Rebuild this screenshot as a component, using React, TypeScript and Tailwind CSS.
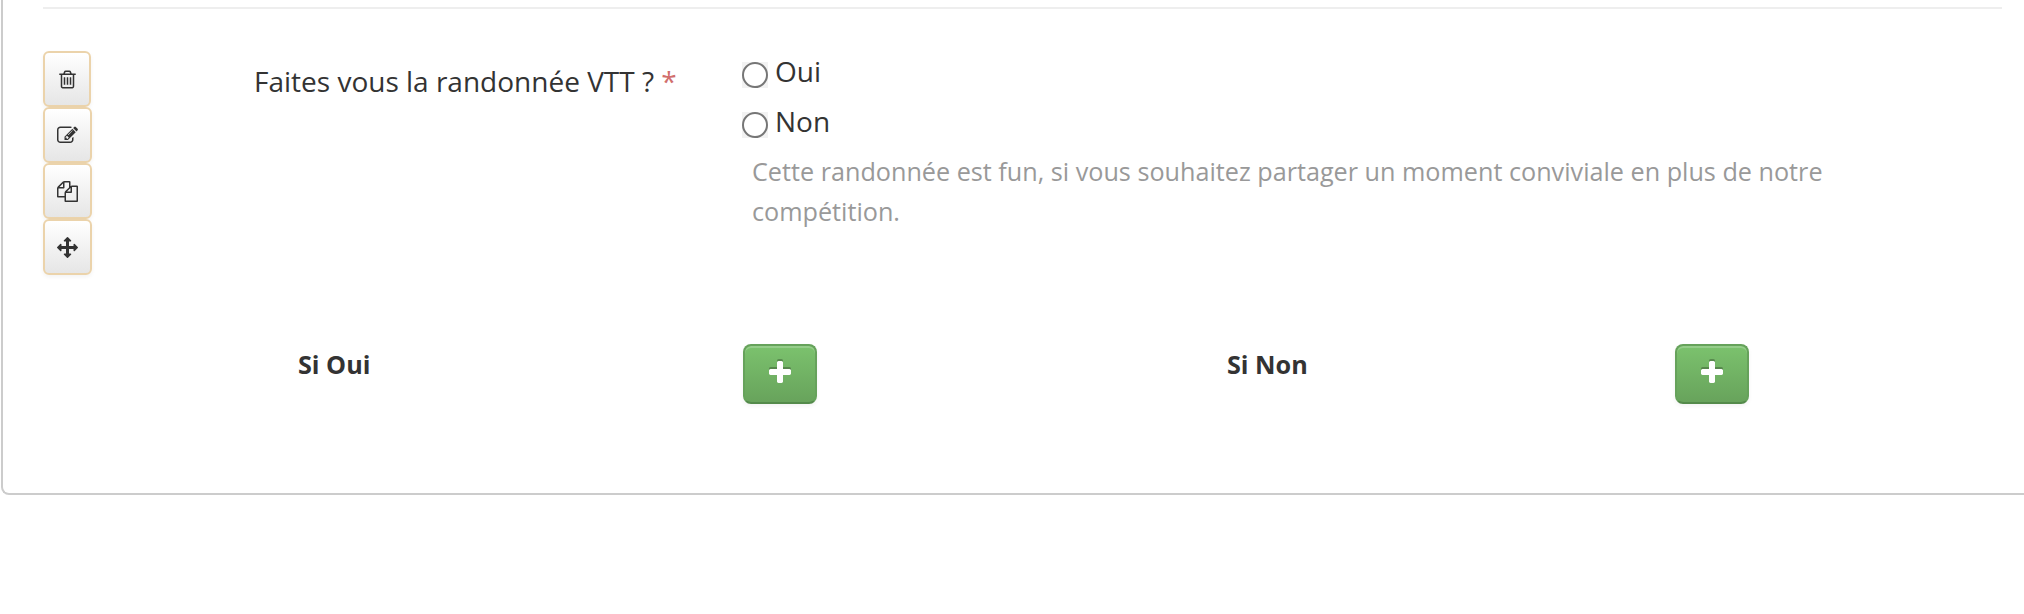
import { useState } from 'react';

const icons = {
  trash: 'M704 736v576q0 14-9 23t-23 9h-64q-14 0-23-9t-9-23v-576q0-14 9-23t23-9h64q14 0 23 9t9 23zm256 0v576q0 14-9 23t-23 9h-64q-14 0-23-9t-9-23v-576q0-14 9-23t23-9h64q14 0 23 9t9 23zm256 0v576q0 14-9 23t-23 9h-64q-14 0-23-9t-9-23v-576q0-14 9-23t23-9h64q14 0 23 9t9 23zm128 724v-948h-896v948q0 22 7 40.5t14.5 27 10.5 8.5h832q3 0 10.5-8.5t14.5-27 7-40.5zm-672-1076h448l-48-117q-7-9-17-11h-317q-10 2-17 11zm928 32v64q0 14-9 23t-23 9h-96v948q0 83-47 143.5t-113 60.5h-832q-66 0-113-58.5t-47-141.5v-952h-96q-14 0-23-9t-9-23v-64q0-14 9-23t23-9h309l70-167q15-37 54-63t79-26h320q40 0 79 26t54 63l70 167h309q14 0 23 9t9 23z',
  edit: 'M888 1184l116-116-152-152-116 116v56h96v96h56zm440-720q-16-16-33 1l-350 350q-17 17-1 33t33-1l350-350q17-17 1-33zm80 594v190q0 119-84.5 203.5t-203.5 84.5h-832q-119 0-203.5-84.5t-84.5-203.5v-832q0-119 84.5-203.5t203.5-84.5h832q63 0 117 25 15 7 18 23 3 17-9 29l-49 49q-14 14-32 8-23-6-45-6h-832q-66 0-113 47t-47 113v832q0 66 47 113t113 47h832q66 0 113-47t47-113v-126q0-13 9-22l64-64q15-15 35-7t20 29zm-96-738l288 288-672 672h-288v-288zm444 132l-92 92-288-288 92-92q28-28 68-28t68 28l152 152q28 28 28 68t-28 68z',
  copy: 'M1696 384q40 0 68 28t28 68v1216q0 40-28 68t-68 28h-960q-40 0-68-28t-28-68v-288h-544q-40 0-68-28t-28-68v-672q0-40 20-88t48-76l408-408q28-28 76-48t88-20h416q40 0 68 28t28 68v328q68-40 128-40h416zm-544 213l-299 299h299v-299zm-640-384l-299 299h299v-299zm196 647l316-316v-416h-384v416q0 40-28 68t-68 28h-416v640h512v-256q0-40 20-88t48-76zm956 804v-1152h-384v416q0 40-28 68t-68 28h-416v640h896z',
  move: 'M1792 896q0 26-19 45l-256 256q-19 19-45 19t-45-19-19-45v-128h-384v384h128q26 0 45 19t19 45-19 45l-256 256q-19 19-45 19t-45-19l-256-256q-19-19-19-45t19-45 45-19h128v-384h-384v128q0 26-19 45t-45 19-45-19l-256-256q-19-19-19-45t19-45l256-256q19-19 45-19t45 19 19 45v128h384v-384h-128q-26 0-45-19t-19-45 19-45l256-256q19-19 45-19t45 19l256 256q19 19 19 45t-19 45-45 19h-128v384h384v-128q0-26 19-45t45-19 45 19l256 256q19 19 19 45z',
  plus: 'M1600 736v192q0 40-28 68t-68 28h-416v416q0 40-28 68t-68 28h-192q-40 0-68-28t-28-68v-416h-416q-40 0-68-28t-28-68v-192q0-40 28-68t68-28h416v-416q0-40 28-68t68-28h192q40 0 68 28t28 68v416h416q40 0 68 28t28 68z',
};

const actions: { label: string; icon: keyof typeof icons; width: string }[] = [
  { label: 'Supprimer', icon: 'trash', width: 'w-12' },
  { label: 'Modifier', icon: 'edit', width: 'w-[49px]' },
  { label: 'Dupliquer', icon: 'copy', width: 'w-[49px]' },
  { label: 'Déplacer', icon: 'move', width: 'w-[49px]' },
];

function Icon({ name, className }: { name: keyof typeof icons; className: string }) {
  return (
    <svg viewBox="0 0 1792 1792" fill="currentColor" className={`overflow-visible ${className}`}>
      <path d={icons[name]} />
    </svg>
  );
}

function AddButton({ label }: { label: string }) {
  return (
    <button
      type="button"
      aria-label={label}
      className="flex h-[60px] w-[74px] items-center justify-center rounded-lg border-2 border-[#66a25b] border-b-[#548a4b] bg-linear-to-b from-[#7cc36e] to-[#67a25b] bg-origin-border text-white shadow-[inset_0_2px_0_rgba(255,255,255,0.2),0_2px_4px_rgba(0,0,0,0.05)]"
    >
      <Icon name="plus" className="mb-0.5 size-7 drop-shadow-[0_-2px_0_rgba(0,0,0,0.25)]" />
    </button>
  );
}

export default function App() {
  const [answer, setAnswer] = useState('');

  return (
    <div className="h-[614px] overflow-hidden bg-white pl-px font-['Open_Sans',sans-serif] text-[#333]">
      <div className="h-[495px] rounded-bl-lg border-b-2 border-l-2 border-[#ccc] pt-[7px] pl-10">
        <hr className="w-[1959px] border-t-2 border-[#eee]" />

        <div className="flex pt-[42px]">
          <div className="flex w-[211px] flex-col">
            {actions.map(action => (
              <button
                key={action.icon}
                type="button"
                aria-label={action.label}
                className={`flex h-14 items-center justify-center rounded-md border-2 border-[#ebd3ab] bg-linear-to-b from-white to-[#e6e6e6] shadow-[0_2px_4px_rgba(0,0,0,0.05)] ${action.width}`}
              >
                <Icon name={action.icon} className="size-[21px]" />
              </button>
            ))}
          </div>

          <div className="w-[488px] pt-[10px] text-[28px] leading-10 whitespace-nowrap">
            Faites vous la randonnée VTT ? <span className="text-[#d16e6c]">*</span>
          </div>

          <div>
            {['Oui', 'Non'].map(option => (
              <label key={option} className="flex h-[50px] items-start text-[28px] leading-10">
                <span className="mt-[11px] mr-[7px] flex bg-[#f2f2f2]">
                  <input
                    type="radio"
                    name="vtt"
                    checked={answer === option}
                    onChange={() => setAnswer(option)}
                    className="size-[26px] appearance-none rounded-full border-2 border-[#767676] bg-white checked:border-8"
                  />
                </span>
                {option}
              </label>
            ))}
            <p className="w-[1100px] pl-[10px] text-[25.2px] leading-10 text-[#999]">
              Cette randonnée est fun, si vous souhaitez partager un moment conviviale en plus de notre compétition.
            </p>
          </div>
        </div>

        <div className="flex pt-[69px] pl-[255px] text-[25.2px] font-bold">
          <div className="w-[445px] leading-10">Si Oui</div>
          <AddButton label="Ajouter si oui" />
          <div className="ml-[410px] w-[448px] leading-10">Si Non</div>
          <AddButton label="Ajouter si non" />
        </div>
      </div>
    </div>
  );
}
